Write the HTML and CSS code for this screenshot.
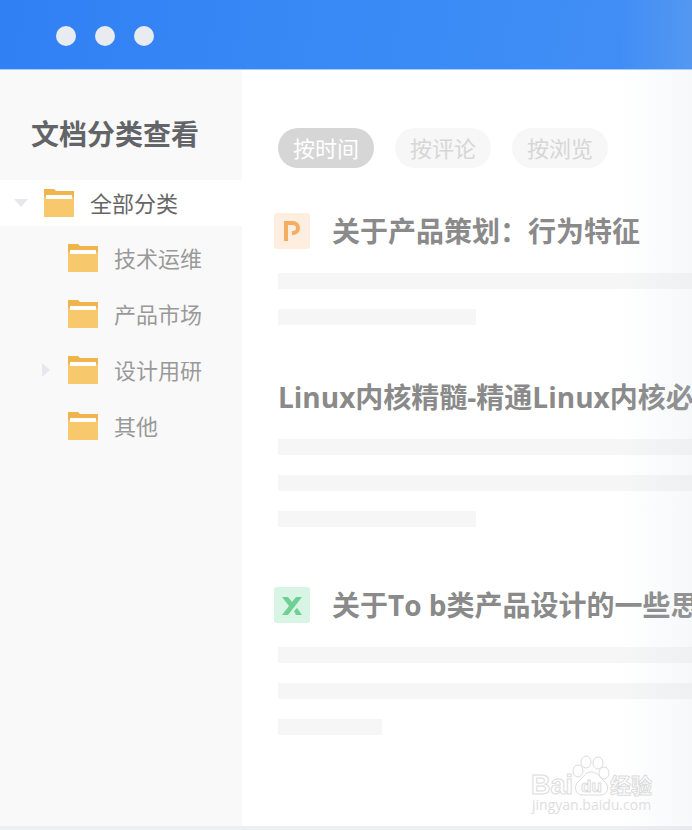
FILE: index.html
```html
<!DOCTYPE html>
<html lang="zh-CN">
<head>
<meta charset="utf-8">
<meta name="viewport" content="width=device-width, initial-scale=1">
<title>文档分类查看</title>
<link rel="stylesheet" href="styles.css">
</head>
<body>
<svg class="sprite" aria-hidden="true">
  <symbol id="folder" viewBox="0 0 30 28">
    <path d="M0 0h10l2 2h18v26H0z" fill="#efb54c"/>
    <path d="M0 8h30v20H0z" fill="#f7c96c"/>
    <path d="M2 6h26v4H2z" fill="#fff"/>
  </symbol>
</svg>
<header class="topbar">
  <span class="dot"></span><span class="dot"></span><span class="dot"></span>
</header>
<div class="body">
  <nav class="sidebar">
    <h1 class="sidebar-title">文档分类查看</h1>
    <a class="item item-root" href="#"><svg class="arrow" viewBox="0 0 14 14"><path d="M0 3h14L7 11z"/></svg><svg class="folder"><use href="#folder"/></svg>全部分类</a>
    <div class="children">
      <a class="item" href="#"><svg class="folder"><use href="#folder"/></svg>技术运维</a>
      <a class="item" href="#"><svg class="folder"><use href="#folder"/></svg>产品市场</a>
      <a class="item item-parent" href="#"><svg class="arrow" viewBox="0 0 14 14"><path d="M4 0v14l8-7z"/></svg><svg class="folder"><use href="#folder"/></svg>设计用研</a>
      <a class="item" href="#"><svg class="folder"><use href="#folder"/></svg>其他</a>
    </div>
  </nav>
  <main class="main">
    <div class="chips">
      <button class="chip chip-active" type="button">按时间</button>
      <button class="chip" type="button">按评论</button>
      <button class="chip" type="button">按浏览</button>
    </div>
    <article class="doc doc-brief">
      <h2 class="doc-title"><svg class="badge" viewBox="0 0 36 36"><rect width="36" height="36" rx="3" fill="#fdeee0"/><path d="M12 28V10h7a5 5 0 0 1 0 10h-1" fill="none" stroke="#f4ad61" stroke-width="4"/></svg>关于产品策划：行为特征</h2>
      <div class="line"></div>
      <div class="line line-half"></div>
    </article>
    <article class="doc">
      <h2 class="doc-title">Linux内核精髓-精通Linux内核必</h2>
      <div class="line"></div>
      <div class="line"></div>
      <div class="line line-half"></div>
    </article>
    <article class="doc">
      <h2 class="doc-title"><svg class="badge" viewBox="0 0 36 36"><rect width="36" height="36" rx="3" fill="#d8f4e4"/><path d="M8 10h6l4 5 4-5h6L14 28H8l7-9zM20 24l3-3 5 7h-6z" fill="#6ed092"/></svg>关于To b类产品设计的一些思</h2>
      <div class="line"></div>
      <div class="line"></div>
      <div class="line line-short"></div>
    </article>
  </main>
</div>
<div class="fade"></div>
<svg class="watermark" viewBox="0 0 130 64" role="img" aria-label="Baidu 经验">
  <g class="outline">
    <ellipse cx="50" cy="17" rx="5" ry="6"/>
    <ellipse cx="58" cy="8" rx="5" ry="6"/>
    <ellipse cx="70" cy="9" rx="5" ry="6"/>
    <ellipse cx="76" cy="19" rx="5" ry="6"/>
    <path d="M63 18C57 18 55 24 51 27C45 32 47 40 54 41C59 41 67 41 72 41C80 41 82 33 77 28C72 24 70 18 63 18z"/>
    <text class="brand" x="3" y="40">Bai</text>
    <text class="du" x="53" y="38">du</text>
    <text class="cn" x="82" y="39">经验</text>
  </g>
  <text class="url" x="4" y="56">jingyan.baidu.com</text>
</svg>
</body>
</html>
```
FILE: styles.css
```css
* {
  box-sizing: border-box;
}

body {
  margin: 0;
  min-height: 100vh;
  display: flex;
  flex-direction: column;
  position: relative;
  overflow-x: hidden;
  background: #fff;
  font-family: "Open Sans", "Noto Sans CJK SC", sans-serif;
}

.sprite {
  position: absolute;
  width: 0;
  height: 0;
}

.topbar {
  display: flex;
  align-items: center;
  gap: 19px;
  height: 70px;
  padding: 2px 0 0 56px;
  background: linear-gradient(100deg, #3080f4, #3b8bf6 60%, #428ff5);
  border-bottom: 1px solid #a5cdfb;
}

.dot {
  width: 20px;
  height: 20px;
  border-radius: 50%;
  background: #e8ebf0;
}

.body {
  flex: 1;
  display: flex;
  border-bottom: 4px solid #eeeff1;
}

.sidebar {
  flex: none;
  width: 242px;
  background: #f9f9f9;
}

.sidebar-title {
  margin: 0;
  padding: 44px 0 26px 31px;
  font-size: 28px;
  line-height: 40px;
  color: #626467;
}

.item {
  display: flex;
  align-items: center;
  height: 56px;
  font-size: 22px;
  line-height: 32px;
  color: #999;
  text-decoration: none;
}

.item-root {
  height: 46px;
  padding-left: 14px;
  background: #fff;
  color: #666;
}

.children {
  padding-top: 4px;
}

.children .item {
  padding-left: 68px;
}

.children .item-parent {
  padding-left: 38px;
}

.arrow {
  width: 14px;
  height: 14px;
  margin-right: 16px;
  fill: #e6e8ee;
}

.folder {
  width: 30px;
  height: 28px;
  margin-right: 16px;
}

.main {
  flex: 1;
  min-width: 0;
  padding: 58px 0 0 36px;
  overflow: hidden;
}

.chips {
  display: flex;
  gap: 21px;
  margin-bottom: 43px;
}

.chip {
  width: 96px;
  height: 40px;
  padding: 0;
  border: 0;
  border-radius: 20px;
  background: #f7f7f7;
  color: #d6d6d6;
  font-family: inherit;
  font-size: 22px;
  line-height: 40px;
}

.chip-active {
  background: #d6d6d6;
  color: #fff;
}

.doc {
  margin-bottom: 58px;
}

.doc-brief {
  margin-bottom: 52px;
}

.doc-title {
  display: flex;
  align-items: center;
  margin: 0 0 22px;
  font-size: 28px;
  line-height: 40px;
  color: #8a8a8a;
  white-space: nowrap;
}

.badge {
  flex: none;
  width: 36px;
  height: 36px;
  margin: 0 22px 0 -4px;
}

.line {
  height: 16px;
  margin-bottom: 20px;
  background: #f6f6f6;
}

.line-half {
  width: 198px;
}

.line-short {
  width: 104px;
}

.fade {
  position: absolute;
  top: 0;
  right: 0;
  bottom: 0;
  width: 72px;
  background: linear-gradient(90deg, rgba(190, 205, 215, 0), rgba(190, 205, 215, 0.14));
  pointer-events: none;
}

.watermark {
  position: absolute;
  right: 34px;
  bottom: 12px;
  width: 130px;
  height: 64px;
}

.outline {
  fill: #fff;
  stroke: #dcdcdc;
  stroke-width: 1;
}

.brand {
  font: bold 27px "Liberation Sans", sans-serif;
}

.du {
  font: bold 17px "Liberation Sans", sans-serif;
}

.cn {
  font: bold 21px "Noto Sans CJK SC", sans-serif;
}

.url {
  font: 14px "Open Sans", sans-serif;
  fill: #dedede;
}
```
